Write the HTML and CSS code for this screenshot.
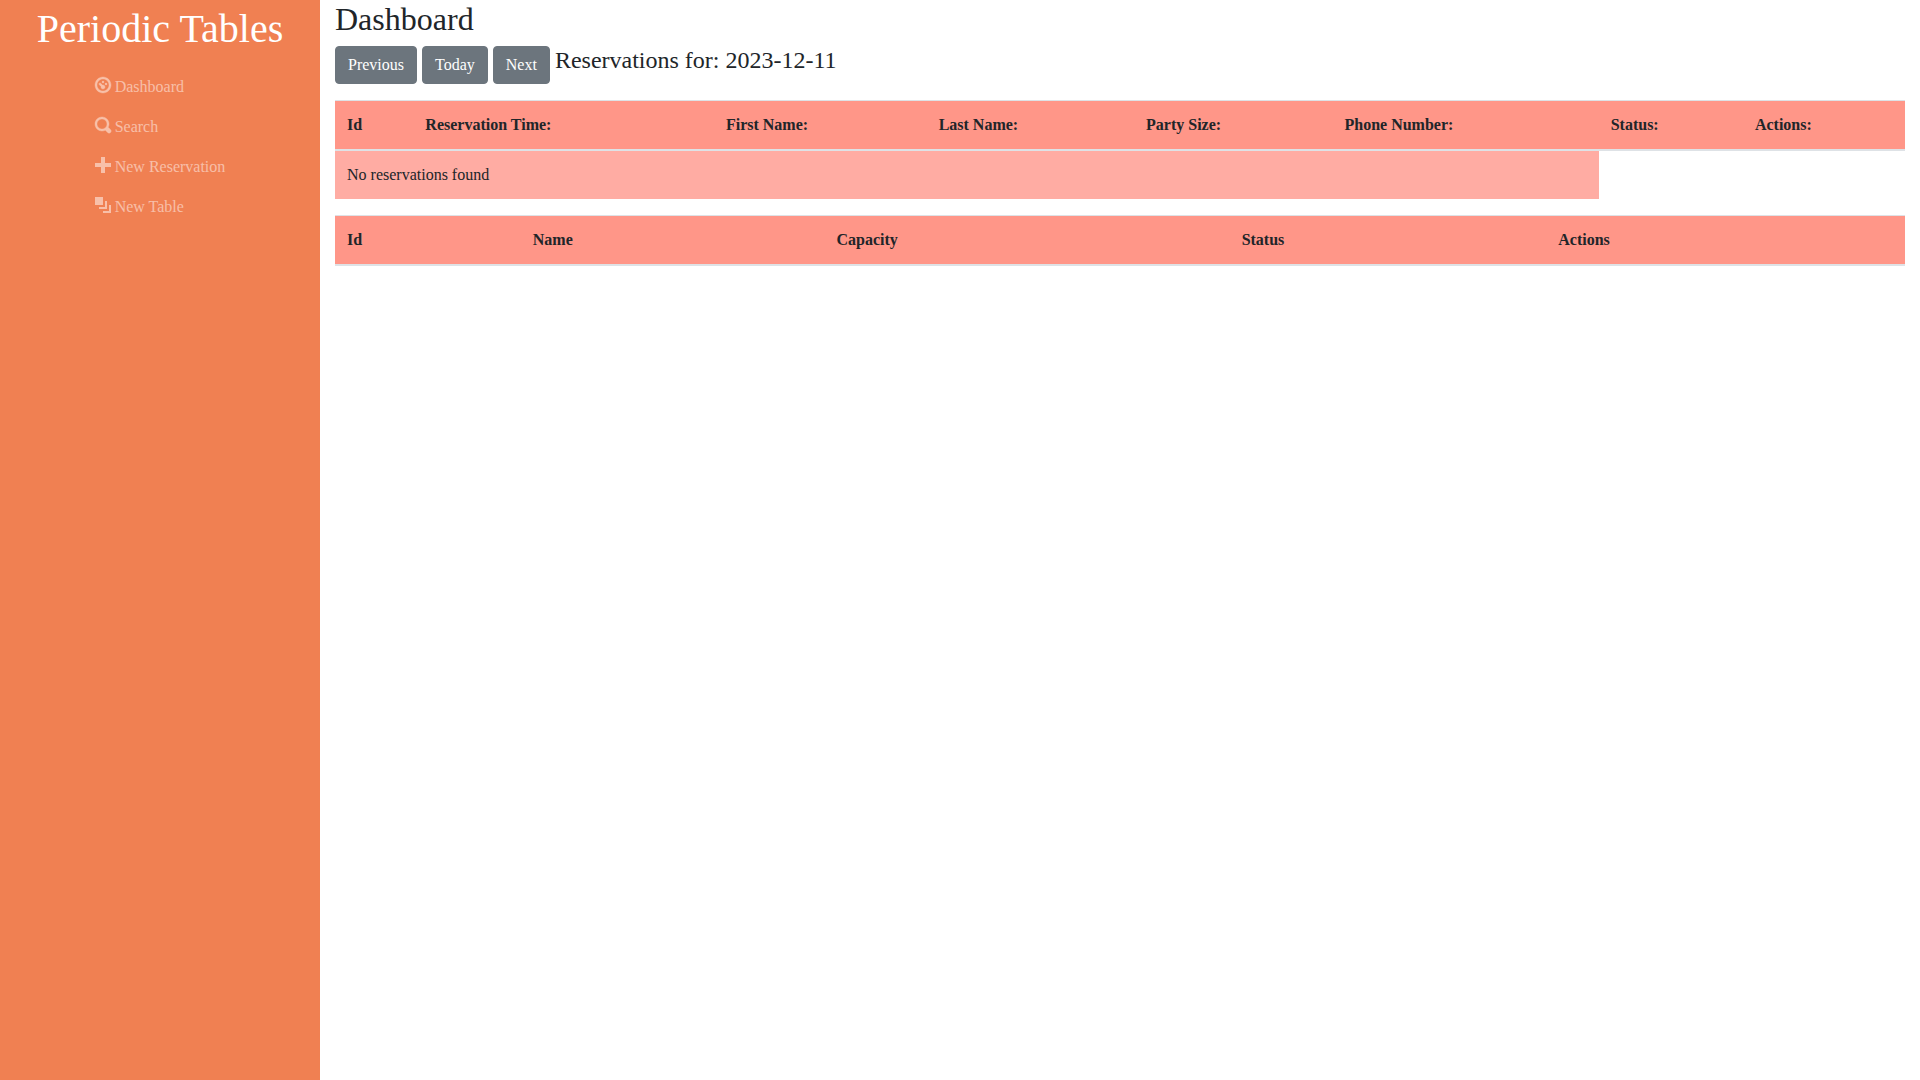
FILE: index.html
```html
<!DOCTYPE html>
<html lang="en">
<head>
<meta charset="utf-8">
<meta name="viewport" content="width=device-width, initial-scale=1">
<title>Periodic Tables</title>
<link rel="stylesheet" href="styles.css">
</head>
<body>
<div class="layout">
  <nav class="sidebar">
    <a class="brand" href="#">Periodic Tables</a>
    <ul class="menu">
      <li><a class="menu-link" href="#"><svg class="icon icon-round" viewBox="0 0 8 8" aria-hidden="true"><path d="M4 0c-2.2 0-4 1.8-4 4s1.8 4 4 4 4-1.8 4-4-1.8-4-4-4zm0 1c1.66 0 3 1.34 3 3s-1.34 3-3 3-3-1.34-3-3 1.34-3 3-3zm0 1c-.28 0-.5.22-.5.5s.22.5.5.5.5-.22.5-.5-.22-.5-.5-.5zm-1.66 1a.5.5 0 0 0-.19.84l.91.91c-.02.08-.06.16-.06.25 0 .55.45 1 1 1s1-.45 1-1-.45-1-1-1c-.09 0-.17.04-.25.06l-.91-.91a.5.5 0 0 0-.44-.16.5.5 0 0 0-.06 0zm3.16 0c-.28 0-.5.22-.5.5s.22.5.5.5.5-.22.5-.5-.22-.5-.5-.5z"/></svg>Dashboard</a></li>
      <li><a class="menu-link" href="#"><svg class="icon icon-round" viewBox="0 0 8 8" aria-hidden="true"><path d="M3.5 0c-1.93 0-3.5 1.57-3.5 3.5s1.57 3.5 3.5 3.5c.59 0 1.17-.14 1.66-.41a1 1 0 0 0 .13.13l1 1a1.02 1.02 0 1 0 1.44-1.44l-1-1a1 1 0 0 0-.16-.13c.27-.49.44-1.06.44-1.66 0-1.93-1.55-3.5-3.5-3.5zm0 1c1.39 0 2.5 1.1 2.5 2.5 0 .66-.24 1.27-.66 1.72-.01.01-.02.02-.03.03a1 1 0 0 0-.13.13c-.44.4-1.04.63-1.69.63-1.39 0-2.5-1.11-2.5-2.5s1.1-2.5 2.5-2.5z"/></svg>Search</a></li>
      <li><a class="menu-link" href="#"><svg class="icon" viewBox="0 0 8 8" aria-hidden="true"><path d="M3 0v3h-3v2h3v3h2v-3h3v-2h-3v-3h-2z"/></svg>New Reservation</a></li>
      <li><a class="menu-link" href="#"><svg class="icon" viewBox="0 0 8 8" aria-hidden="true"><path d="M0 0v4h4v-4h-4zm5 2v3h-3v1h4v-4h-1zm2 2v3h-3v1h4v-4h-1z"/></svg>New Table</a></li>
    </ul>
  </nav>
  <main class="content">
    <h1 class="title">Dashboard</h1>
    <div class="toolbar">
      <button class="btn" type="button">Previous</button>
      <button class="btn" type="button">Today</button>
      <button class="btn" type="button">Next</button>
      <h2 class="subtitle">Reservations for: 2023-12-11</h2>
    </div>
    <table class="table">
      <thead>
        <tr>
          <th scope="col">Id</th>
          <th scope="col">Reservation Time:</th>
          <th scope="col">First Name:</th>
          <th scope="col">Last Name:</th>
          <th scope="col">Party Size:</th>
          <th scope="col">Phone Number:</th>
          <th scope="col">Status:</th>
          <th scope="col">Actions:</th>
        </tr>
      </thead>
      <tbody>
        <tr><td colspan="6">No reservations found</td></tr>
      </tbody>
    </table>
    <table class="table">
      <thead>
        <tr>
          <th scope="col">Id</th>
          <th scope="col">Name</th>
          <th scope="col">Capacity</th>
          <th scope="col">Status</th>
          <th scope="col">Actions</th>
        </tr>
      </thead>
      <tbody></tbody>
    </table>
  </main>
</div>
</body>
</html>
```

FILE: styles.css
```css
* { box-sizing: border-box; }

body {
  margin: 0;
  background: #fff;
  color: #212529;
  font: 16px/24px "Liberation Serif", "Times New Roman", serif;
}

.layout {
  display: grid;
  grid-template-columns: 1fr 5fr;
  min-height: 100vh;
}

.sidebar {
  display: flex;
  flex-direction: column;
  align-items: center;
  background: #f08052;
}

.brand {
  padding: 5px 0 14px;
  color: #fff;
  font-size: 40px;
  line-height: 48px;
  text-decoration: none;
}

.menu {
  margin: 0;
  padding: 0;
  list-style: none;
}

.menu-link {
  display: flex;
  align-items: center;
  gap: 4px;
  padding: 8px 0;
  color: rgba(255, 255, 255, 0.5);
  text-decoration: none;
}

.icon {
  width: 16px;
  height: 16px;
  margin-bottom: 4px;
  fill: currentColor;
  overflow: visible;
}

.icon-round {
  fill: #f8c0a9;
  stroke: #f8c0a9;
  stroke-width: 0.2;
}

.content {
  min-width: 0;
  padding: 0 15px;
}

.title {
  margin: 0 0 8px;
  font-size: 32px;
  font-weight: 500;
  line-height: 38px;
}

.toolbar {
  display: flex;
  align-items: flex-start;
  gap: 5px;
  margin-bottom: 16px;
}

.btn {
  padding: 6px 12px;
  border: 1px solid #6c757d;
  border-radius: 4px;
  background: #6c757d;
  color: #fff;
  font: inherit;
  cursor: pointer;
}

.subtitle {
  margin: 0;
  font-size: 24px;
  font-weight: 500;
  line-height: 29px;
}

.table {
  width: 100%;
  margin-bottom: 16px;
  border-collapse: collapse;
}

.table th,
.table td {
  padding: 12px;
  border-top: 1px solid #dee2e6;
  text-align: left;
  vertical-align: top;
}

.table th {
  border-bottom: 2px solid #dee2e6;
  background: #ff9688;
}

.table td {
  background: #ffaca3;
}
```
